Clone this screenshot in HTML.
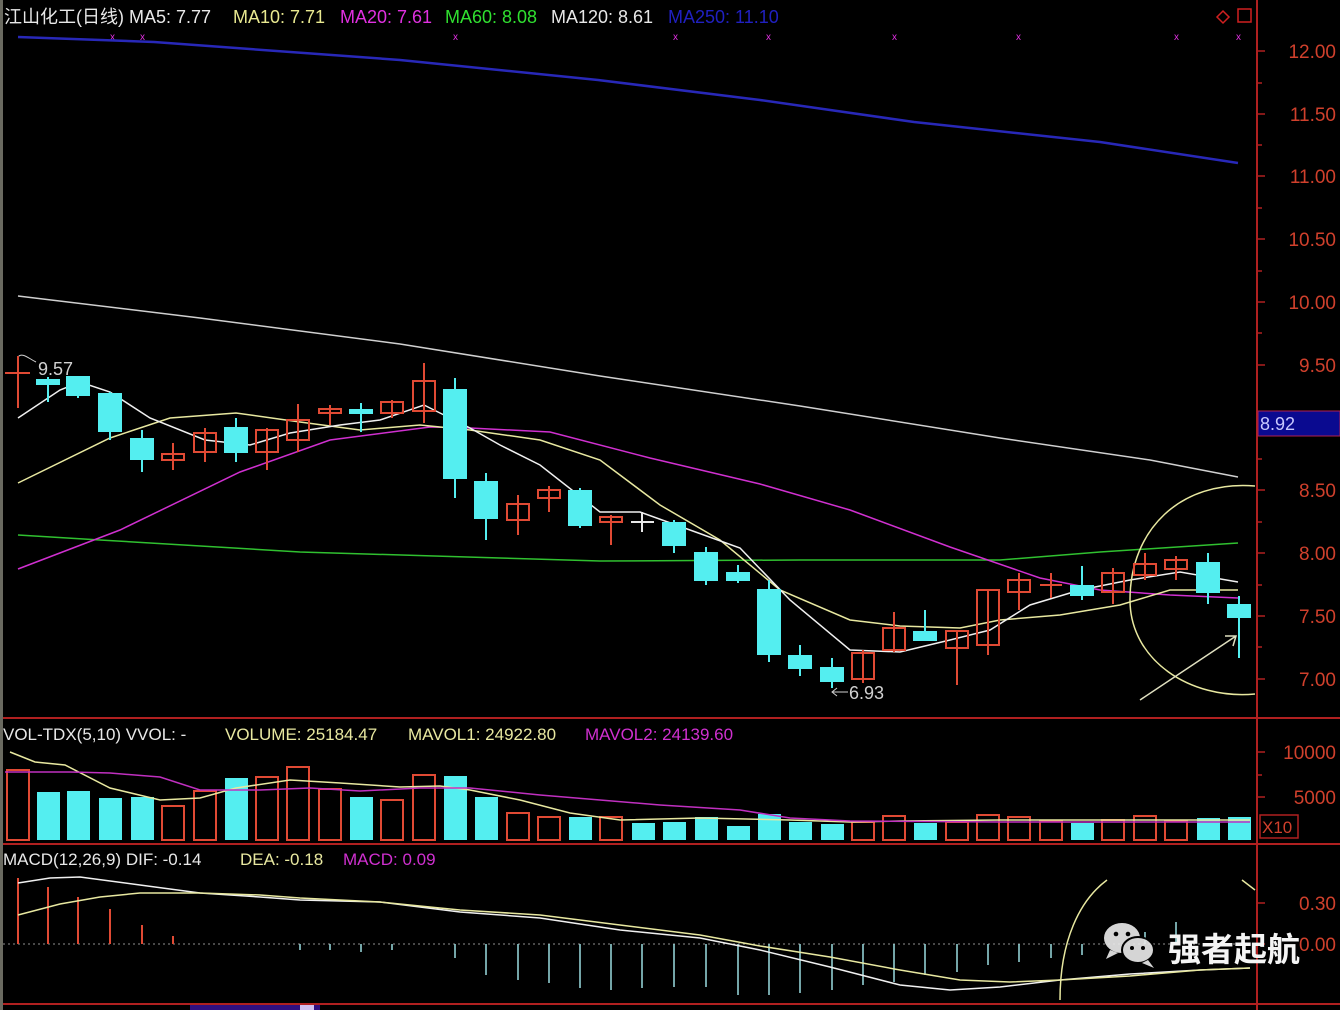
<!DOCTYPE html>
<html><head><meta charset="utf-8"><style>
html,body{margin:0;padding:0;background:#000;width:1340px;height:1010px;overflow:hidden}
svg{display:block}
text{font-family:"Liberation Sans","Noto Sans CJK SC",sans-serif}
</style></head><body>
<svg width="1340" height="1010" viewBox="0 0 1340 1010" xmlns="http://www.w3.org/2000/svg">
<rect width="1340" height="1010" fill="#000"/>
<rect x="0" y="0" width="3" height="1010" fill="#6a6a60"/>
<g stroke="#b02020" stroke-width="2" fill="none">
<line x1="1257" y1="0" x2="1257" y2="1010"/>
<line x1="3" y1="718" x2="1340" y2="718"/>
<line x1="3" y1="844" x2="1340" y2="844"/>
<line x1="3" y1="1004" x2="1340" y2="1004"/>
</g>
<g stroke="#b02020" stroke-width="1.5">
<line x1="1257" y1="51" x2="1265" y2="51"/><line x1="1257" y1="114" x2="1265" y2="114"/><line x1="1257" y1="176" x2="1265" y2="176"/><line x1="1257" y1="239" x2="1265" y2="239"/><line x1="1257" y1="302" x2="1265" y2="302"/><line x1="1257" y1="365" x2="1265" y2="365"/><line x1="1257" y1="490" x2="1265" y2="490"/><line x1="1257" y1="553" x2="1265" y2="553"/><line x1="1257" y1="616" x2="1265" y2="616"/><line x1="1257" y1="679" x2="1265" y2="679"/>
<line x1="1257" y1="83" x2="1262" y2="83"/><line x1="1257" y1="145" x2="1262" y2="145"/><line x1="1257" y1="208" x2="1262" y2="208"/><line x1="1257" y1="271" x2="1262" y2="271"/><line x1="1257" y1="333" x2="1262" y2="333"/><line x1="1257" y1="459" x2="1262" y2="459"/><line x1="1257" y1="522" x2="1262" y2="522"/><line x1="1257" y1="585" x2="1262" y2="585"/><line x1="1257" y1="647" x2="1262" y2="647"/>
<line x1="1257" y1="752" x2="1265" y2="752"/><line x1="1257" y1="775" x2="1262" y2="775"/><line x1="1257" y1="797" x2="1265" y2="797"/>
<line x1="1257" y1="903" x2="1265" y2="903"/><line x1="1257" y1="944" x2="1265" y2="944"/>
</g>
<g fill="#d0402c" font-size="19" text-anchor="end">
<text x="1336" y="58">12.00</text><text x="1336" y="121">11.50</text><text x="1336" y="183">11.00</text><text x="1336" y="246">10.50</text><text x="1336" y="309">10.00</text><text x="1336" y="372">9.50</text><text x="1336" y="497">8.50</text><text x="1336" y="560">8.00</text><text x="1336" y="623">7.50</text><text x="1336" y="686">7.00</text>
<text x="1336" y="759">10000</text><text x="1336" y="804">5000</text>
<text x="1336" y="910">0.30</text><text x="1336" y="951">0.00</text>
</g>
<rect x="1258" y="411" width="82" height="25" fill="#0a0a90" stroke="#b02050"/>
<text x="1260" y="430" fill="#c8c8ff" font-size="18">8.92</text>
<rect x="1260" y="815" width="38" height="23" fill="none" stroke="#b02020" stroke-width="1.5"/>
<text x="1262" y="833" fill="#d0402c" font-size="17">X10</text>
<g stroke="#d02020" fill="none" stroke-width="1.5"><path d="M1223 11 l6 6 l-6 6 l-6 -6z"/><rect x="1238" y="9" width="13" height="13"/></g>
<g font-size="18">
<text x="4" y="23" fill="#e8e8e8">江山化工(日线) MA5: 7.77</text>
<text x="233" y="23" fill="#e8e890">MA10: 7.71</text>
<text x="340" y="23" fill="#e030e0">MA20: 7.61</text>
<text x="445" y="23" fill="#30e030">MA60: 8.08</text>
<text x="551" y="23" fill="#e8e8e8">MA120: 8.61</text>
<text x="668" y="23" fill="#2020c0">MA250: 11.10</text>
</g>
<g fill="#e030e0" font-size="10"><text x="110" y="40">x</text><text x="140" y="40">x</text><text x="453" y="40">x</text><text x="673" y="40">x</text><text x="766" y="40">x</text><text x="892" y="40">x</text><text x="1016" y="40">x</text><text x="1174" y="40">x</text><text x="1236" y="40">x</text></g>
<polyline fill="none" stroke="#2828b8" stroke-width="2.5" points="18,37 154,42 400,60 598,80 760,100 914,122 1100,142 1238,163"/>
<polyline fill="none" stroke="#d0d0d0" stroke-width="1.5" points="18,296 200,318 400,344 600,376 800,406 1000,438 1150,460 1238,477"/>
<polyline fill="none" stroke="#30c030" stroke-width="1.5" points="18,535 100,540 300,552 500,558 600,561 800,560 1000,560 1100,552 1238,543"/>
<polyline fill="none" stroke="#d030d0" stroke-width="1.5" points="18,569 120,530 240,472 330,440 430,427 470,428 550,432 650,458 760,484 850,510 950,547 1040,578 1100,590 1170,595 1238,598"/>
<polyline fill="none" stroke="#e8e8a0" stroke-width="1.5" points="18,483 110,438 170,418 236,413 300,422 360,430 420,425 470,430 540,440 600,460 660,505 720,540 780,590 850,620 900,626 960,628 1000,620 1060,615 1120,605 1170,590 1238,590"/>
<polyline fill="none" stroke="#f0f0f0" stroke-width="1.5" points="18,418 60,390 80,382 110,392 150,418 205,440 250,445 290,433 340,425 380,420 424,405 470,428 500,445 540,465 600,512 640,512 690,530 740,548 790,600 850,650 900,652 950,640 990,630 1030,605 1080,590 1130,580 1180,572 1238,582"/>
<path d="M1255 486 C1180 480 1130 530 1130 600 C1130 660 1190 700 1255 694" fill="none" stroke="#e8e8a0" stroke-width="1.5"/>
<path d="M1140 700 L1236 636 M1225 636 L1236 636 L1233 646" fill="none" stroke="#e0e0c0" stroke-width="1.5"/>
<path d="M1107 880 C1080 900 1060 940 1060 1000" fill="none" stroke="#e8e8a0" stroke-width="1.5"/>
<path d="M1242 880 L1255 890" fill="none" stroke="#e8e8a0" stroke-width="1.5"/>
<text x="38" y="375" fill="#d0d0d0" font-size="18">9.57</text>
<path d="M18 357 C22 352 28 358 36 362" fill="none" stroke="#d0d0d0"/>
<text x="849" y="699" fill="#d0d0d0" font-size="18">6.93</text>
<path d="M848 692 L832 692 M837 688 L832 692 L837 696" fill="none" stroke="#d0d0d0"/>
<g stroke="#e04a34" stroke-width="2" fill="none">
<line x1="18" y1="356" x2="18" y2="408"/><line x1="5" y1="373" x2="30" y2="373"/>
<line x1="173" y1="443" x2="173" y2="470"/><rect x="162" y="454" width="22" height="6"/>
<line x1="205" y1="428" x2="205" y2="462"/><rect x="194" y="433" width="22" height="19"/>
<line x1="267" y1="428" x2="267" y2="470"/><rect x="256" y="430" width="22" height="22"/>
<line x1="298" y1="404" x2="298" y2="452"/><rect x="287" y="420" width="22" height="20"/>
<line x1="330" y1="405" x2="330" y2="425"/><rect x="319" y="409" width="22" height="4"/>
<line x1="392" y1="400" x2="392" y2="418"/><rect x="381" y="402" width="22" height="11"/>
<line x1="424" y1="363" x2="424" y2="423"/><rect x="413" y="381" width="22" height="30"/>
<line x1="518" y1="495" x2="518" y2="535"/><rect x="507" y="504" width="22" height="16"/>
<line x1="549" y1="486" x2="549" y2="512"/><rect x="538" y="490" width="22" height="8"/>
<line x1="611" y1="515" x2="611" y2="545"/><rect x="600" y="517" width="22" height="5"/>
<line x1="863" y1="650" x2="863" y2="683"/><rect x="852" y="653" width="22" height="26"/>
<line x1="894" y1="612" x2="894" y2="652"/><rect x="883" y="628" width="22" height="22"/>
<line x1="957" y1="630" x2="957" y2="685"/><rect x="946" y="631" width="22" height="17"/>
<line x1="988" y1="590" x2="988" y2="655"/><rect x="977" y="590" width="22" height="55"/>
<line x1="1019" y1="573" x2="1019" y2="610"/><rect x="1008" y="580" width="22" height="12"/>
<line x1="1051" y1="573" x2="1051" y2="598"/><line x1="1040" y1="585" x2="1062" y2="585"/>
<line x1="1113" y1="568" x2="1113" y2="604"/><rect x="1102" y="573" width="22" height="19"/>
<line x1="1145" y1="553" x2="1145" y2="580"/><rect x="1134" y="564" width="22" height="11"/>
<line x1="1176" y1="556" x2="1176" y2="580"/><rect x="1165" y="560" width="22" height="9"/>
</g>
<g stroke="#e8e8e8" stroke-width="2"><line x1="642" y1="512" x2="642" y2="532"/><line x1="631" y1="522" x2="654" y2="522"/></g>
<g stroke="#54eef0" stroke-width="2" fill="#54eef0">
<line x1="48" y1="377" x2="48" y2="402"/><rect x="37" y="380" width="22" height="4"/>
<line x1="78" y1="377" x2="78" y2="398"/><rect x="67" y="377" width="22" height="18"/>
<line x1="110" y1="392" x2="110" y2="440"/><rect x="99" y="394" width="22" height="37"/>
<line x1="142" y1="430" x2="142" y2="472"/><rect x="131" y="439" width="22" height="20"/>
<line x1="236" y1="418" x2="236" y2="462"/><rect x="225" y="428" width="22" height="24"/>
<line x1="361" y1="403" x2="361" y2="432"/><rect x="350" y="410" width="22" height="3"/>
<line x1="455" y1="378" x2="455" y2="498"/><rect x="444" y="390" width="22" height="88"/>
<line x1="486" y1="473" x2="486" y2="540"/><rect x="475" y="482" width="22" height="36"/>
<line x1="580" y1="488" x2="580" y2="528"/><rect x="569" y="491" width="22" height="34"/>
<line x1="674" y1="520" x2="674" y2="553"/><rect x="663" y="523" width="22" height="22"/>
<line x1="706" y1="547" x2="706" y2="585"/><rect x="695" y="553" width="22" height="27"/>
<line x1="738" y1="565" x2="738" y2="583"/><rect x="727" y="573" width="22" height="7"/>
<line x1="769" y1="580" x2="769" y2="662"/><rect x="758" y="590" width="22" height="64"/>
<line x1="800" y1="645" x2="800" y2="676"/><rect x="789" y="656" width="22" height="12"/>
<line x1="832" y1="658" x2="832" y2="688"/><rect x="821" y="668" width="22" height="13"/>
<line x1="925" y1="610" x2="925" y2="640"/><rect x="914" y="632" width="22" height="8"/>
<line x1="1082" y1="566" x2="1082" y2="600"/><rect x="1071" y="586" width="22" height="9"/>
<line x1="1208" y1="553" x2="1208" y2="604"/><rect x="1197" y="563" width="22" height="29"/>
<line x1="1239" y1="596" x2="1239" y2="658"/><rect x="1228" y="605" width="22" height="12"/>
</g>
<g font-size="17">
<text x="3" y="740" fill="#e8e8e8">VOL-TDX(5,10) VVOL: -</text>
<text x="225" y="740" fill="#e8e8a0">VOLUME: 25184.47</text>
<text x="408" y="740" fill="#e8e8a0">MAVOL1: 24922.80</text>
<text x="585" y="740" fill="#d030d0">MAVOL2: 24139.60</text>
</g>
<g stroke="#e04a34" stroke-width="2" fill="none">
<rect x="7" y="770" width="22" height="70"/>
<rect x="162" y="806" width="22" height="34"/><rect x="194" y="791" width="22" height="49"/>
<rect x="256" y="777" width="22" height="63"/><rect x="287" y="767" width="22" height="73"/><rect x="319" y="789" width="22" height="51"/>
<rect x="381" y="800" width="22" height="40"/><rect x="413" y="775" width="22" height="65"/>
<rect x="507" y="813" width="22" height="27"/><rect x="538" y="817" width="22" height="23"/><rect x="600" y="817" width="22" height="23"/>
<rect x="852" y="822" width="22" height="18"/><rect x="883" y="816" width="22" height="24"/><rect x="946" y="822" width="22" height="18"/><rect x="977" y="815" width="22" height="25"/><rect x="1008" y="817" width="22" height="23"/><rect x="1040" y="821" width="22" height="19"/><rect x="1102" y="820" width="22" height="20"/><rect x="1134" y="816" width="22" height="24"/><rect x="1165" y="821" width="22" height="19"/>
</g>
<g fill="#54eef0">
<rect x="37" y="792" width="23" height="48"/><rect x="67" y="791" width="23" height="49"/><rect x="99" y="798" width="23" height="42"/><rect x="131" y="797" width="23" height="43"/>
<rect x="225" y="778" width="23" height="62"/><rect x="350" y="797" width="23" height="43"/>
<rect x="444" y="776" width="23" height="64"/><rect x="475" y="797" width="23" height="43"/>
<rect x="569" y="817" width="23" height="23"/><rect x="632" y="823" width="23" height="17"/><rect x="663" y="822" width="23" height="18"/><rect x="695" y="817" width="23" height="23"/><rect x="727" y="826" width="23" height="14"/><rect x="758" y="814" width="23" height="26"/><rect x="789" y="822" width="23" height="18"/><rect x="821" y="824" width="23" height="16"/><rect x="914" y="823" width="23" height="17"/><rect x="1071" y="823" width="23" height="17"/><rect x="1197" y="818" width="23" height="22"/><rect x="1228" y="817" width="23" height="23"/>
</g>
<polyline fill="none" stroke="#e8e8a0" stroke-width="1.5" points="10,752 35,762 65,765 110,788 160,800 200,798 236,788 290,780 340,783 400,787 440,786 470,790 520,800 570,813 620,820 700,818 790,820 850,822 900,821 1000,820 1100,820 1250,820"/>
<polyline fill="none" stroke="#c030c0" stroke-width="1.5" points="5,772 70,772 110,773 160,777 200,790 260,790 310,788 360,791 420,788 470,788 540,795 600,800 660,805 740,810 790,818 850,821 1000,822 1250,822"/>
<g font-size="17">
<text x="3" y="865" fill="#e8e8e8">MACD(12,26,9) DIF: -0.14</text>
<text x="240" y="865" fill="#e8e8a0">DEA: -0.18</text>
<text x="343" y="865" fill="#d030d0">MACD: 0.09</text>
</g>
<line x1="3" y1="944" x2="1257" y2="944" stroke="#909090" stroke-width="1" stroke-dasharray="2,3"/>
<g stroke="#e04a34" stroke-width="2">
<line x1="18" y1="878" x2="18" y2="944"/><line x1="48" y1="887" x2="48" y2="944"/><line x1="78" y1="897" x2="78" y2="944"/><line x1="110" y1="909" x2="110" y2="944"/><line x1="142" y1="925" x2="142" y2="944"/><line x1="173" y1="936" x2="173" y2="944"/>
</g>
<g stroke="#9adce0" stroke-width="1.5">
<line x1="300" y1="944" x2="300" y2="950"/><line x1="330" y1="944" x2="330" y2="950"/><line x1="361" y1="944" x2="361" y2="952"/><line x1="392" y1="944" x2="392" y2="950"/>
<line x1="455" y1="944" x2="455" y2="958"/><line x1="486" y1="944" x2="486" y2="975"/><line x1="518" y1="944" x2="518" y2="980"/><line x1="549" y1="944" x2="549" y2="983"/><line x1="580" y1="944" x2="580" y2="988"/><line x1="611" y1="944" x2="611" y2="990"/><line x1="642" y1="944" x2="642" y2="988"/><line x1="674" y1="944" x2="674" y2="987"/><line x1="706" y1="944" x2="706" y2="987"/><line x1="738" y1="944" x2="738" y2="995"/><line x1="769" y1="944" x2="769" y2="995"/><line x1="800" y1="944" x2="800" y2="993"/><line x1="832" y1="944" x2="832" y2="990"/><line x1="863" y1="944" x2="863" y2="985"/><line x1="894" y1="944" x2="894" y2="982"/><line x1="925" y1="944" x2="925" y2="975"/><line x1="957" y1="944" x2="957" y2="972"/><line x1="988" y1="944" x2="988" y2="965"/><line x1="1019" y1="944" x2="1019" y2="962"/><line x1="1051" y1="944" x2="1051" y2="958"/><line x1="1082" y1="944" x2="1082" y2="955"/><line x1="1145" y1="932" x2="1145" y2="944"/><line x1="1176" y1="922" x2="1176" y2="944"/>
</g>
<polyline fill="none" stroke="#f0f0f0" stroke-width="1.5" points="18,883 50,878 80,877 140,885 200,893 260,897 300,900 380,902 460,912 540,918 620,930 700,938 760,950 830,967 900,985 950,990 1000,987 1060,980 1130,974 1200,970 1250,968"/>
<polyline fill="none" stroke="#e8e8a0" stroke-width="1.5" points="18,915 60,904 100,897 140,893 200,893 260,895 300,898 380,902 460,910 540,915 620,925 700,935 760,946 830,957 900,970 960,980 1010,982 1060,980 1130,976 1200,970 1250,968"/>
<rect x="190" y="1005" width="130" height="5" fill="#301080"/>
<rect x="300" y="1005" width="14" height="5" fill="#d0c0f0"/>
<g fill="#e8e8e8" opacity="0.92">
<ellipse cx="1122" cy="938" rx="18" ry="15"/>
<path d="M1110 950 l-4 9 l12 -6z"/>
<ellipse cx="1138" cy="950" rx="16" ry="13" stroke="#000" stroke-width="2"/>
<path d="M1148 960 l6 8 l-12 -5z"/>
</g>
<g fill="#000"><circle cx="1116" cy="934" r="2.3"/><circle cx="1128" cy="934" r="2.3"/><circle cx="1132" cy="948" r="2"/><circle cx="1143" cy="948" r="2"/></g>
<text x="1168" y="961" fill="#f4f4f4" font-size="33" font-family="'Noto Sans CJK SC',sans-serif" font-weight="bold">强者起航</text>
</svg>
</body></html>
